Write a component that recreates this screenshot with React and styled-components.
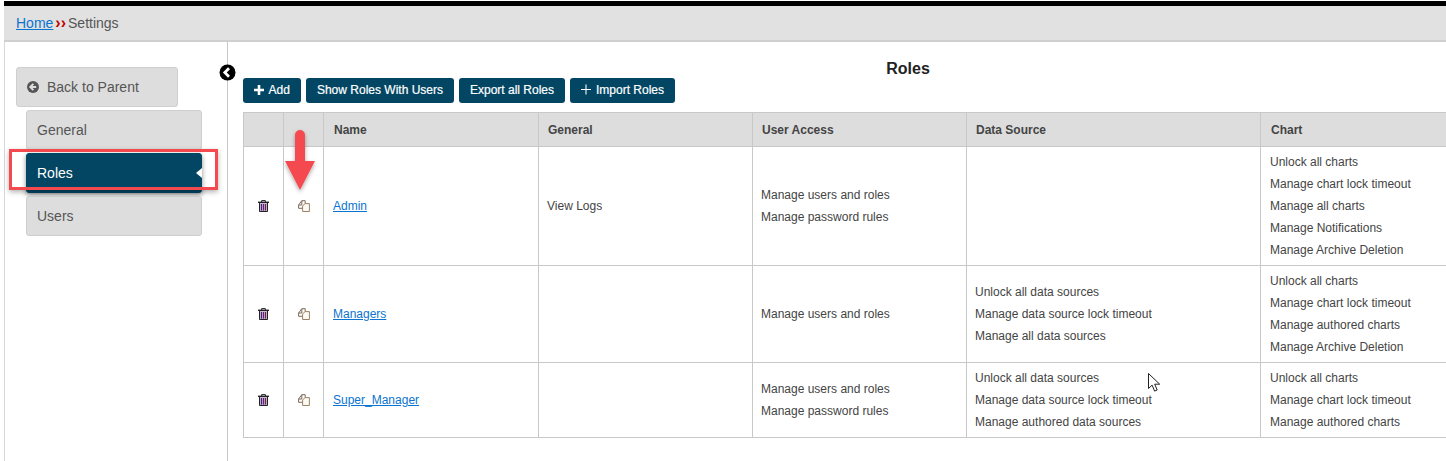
import React from "react";
import styled, { createGlobalStyle } from "styled-components";

const Global = createGlobalStyle`
  html, body { margin: 0; padding: 0; background: #fff; overflow: hidden; }
  body { font-family: "Liberation Sans", Arial, sans-serif; }
`;

const Page = styled.div`
  position: relative;
  width: 1446px;
  height: 461px;
  padding: 1px 0 0 4px;
  box-sizing: border-box;
  overflow: hidden;
  display: flex;
  flex-direction: column;
`;
const TopBar = styled.div`
  height: 5px;
  background: #000;
  flex: none;
`;
const Crumbs = styled.div`
  height: 36px;
  box-sizing: border-box;
  flex: none;
  background: #e1e1e1;
  border-bottom: 2px solid #cfcfcf;
  display: flex;
  align-items: center;
  padding: 0 0 0 12px;
  font-size: 14px;
  color: #555;
`;
const HomeLink = styled.a`
  color: #0b74d1;
  text-decoration: underline;
`;
const Sep = styled.span`
  color: #c00000;
  font-weight: bold;
  font-size: 16px;
  line-height: 14px;
  margin: 0 2px;
`;
const Body = styled.div`
  flex: 1;
  display: flex;
  border-left: 1px solid #d8d8d8;
  min-height: 0;
`;
const Sidebar = styled.aside`
  position: relative;
  width: 223px;
  flex: none;
  border-right: 1px solid #c8c8c8;
  padding: 25px 0 0 11px;
  box-sizing: border-box;
  display: flex;
  flex-direction: column;
`;
const BackButton = styled.div`
  width: 162px;
  height: 40px;
  box-sizing: border-box;
  background: #dddddd;
  border: 1px solid #cfcfcf;
  border-radius: 3px;
  display: flex;
  align-items: center;
  gap: 8px;
  padding-left: 10px;
  font-size: 14px;
  color: #555;
`;
const NavList = styled.nav`
  margin: 3px 0 0 10px;
  width: 176px;
  display: flex;
  flex-direction: column;
  gap: 3px;
`;
const NavItem = styled.div`
  position: relative;
  height: 40px;
  box-sizing: border-box;
  border-radius: 3px;
  display: flex;
  align-items: center;
  padding-left: 10px;
  font-size: 14px;
  background: ${p => (p.$active ? "#024664" : "#dddddd")};
  color: ${p => (p.$active ? "#fff" : "#555")};
  border: 1px solid ${p => (p.$active ? "#024664" : "#cfcfcf")};
  box-shadow: ${p => (p.$active ? "0 2px 5px rgba(0,0,0,.45)" : "none")};
`;
const Notch = styled.span`
  position: absolute;
  right: -1px;
  top: 14px;
  border: 5px solid transparent;
  border-left: 0;
  border-right: 6px solid #fff;
`;
const Collapse = styled.span`
  position: absolute;
  right: -9px;
  top: 22px;
  width: 17px;
  height: 17px;
  line-height: 0;
`;
const Main = styled.main`
  flex: 1;
  min-width: 0;
  position: relative;
  padding: 18px 0 0 15px;
`;
const Title = styled.h1`
  margin: 0;
  font-size: 16px;
  line-height: 18px;
  font-weight: bold;
  color: #222;
  text-align: center;
  width: 1330px;
`;
const Toolbar = styled.div`
  display: flex;
  gap: 5px;
  margin-bottom: 9px;
`;
const Btn = styled.button`
  height: 25px;
  padding: 0 11.4px 2px 10.6px;
  background: #024664;
  color: #fff;
  border: 0;
  border-radius: 3px;
  font: 12px "Liberation Sans", Arial, sans-serif;
  -webkit-text-stroke: 0.2px #fff;
  display: flex;
  align-items: center;
  gap: 5px;
`;
const Table = styled.table`
  border-collapse: collapse;
  table-layout: fixed;
  width: 1300px;
  font-size: 12px;
  color: #444;
`;
const Th = styled.th`
  background: #dddddd;
  border: 1px solid #c8c8c8;
  height: 33px;
  padding: 0 0 0 ${p => (p.$wide ? 10 : 9)}px;
  text-align: left;
  font-weight: bold;
  color: #444;
`;
const Td = styled.td`
  border: 1px solid #c8c8c8;
  padding: 4px 8px;
  padding-left: ${p => (p.$wide ? 9 : 8)}px;
  height: ${p => p.$h}px;
  box-sizing: border-box;
  vertical-align: middle;
  line-height: 22px;
`;
const IconTd = styled(Td)`
  padding: 0;
  text-align: center;
  line-height: 0;
`;
const RoleLink = styled.a`
  color: #0b74d1;
  text-decoration: underline;
`;
const Line = styled.div`
  white-space: nowrap;
`;
const Highlight = styled.div`
  position: absolute;
  left: 9px;
  top: 149px;
  width: 209px;
  height: 41px;
  box-sizing: border-box;
  border: 3px solid #f44a4f;
  box-shadow: 0 2px 5px rgba(0, 0, 0, .3);
`;
const Overlay = styled.svg`
  position: absolute;
  overflow: visible;
`;
const ArrowOverlay = styled(Overlay)`
  left: 285px;
  top: 130px;
`;
const CursorOverlay = styled(Overlay)`
  left: 1148px;
  top: 373px;
`;

const Back = () => (
  <svg width="12" height="12" viewBox="0 0 12 12">
    <circle cx="6" cy="6" r="6" fill="#555" />
    <path d="M6.4 2.8 3.2 6l3.2 3.2M3.4 6H9.2" fill="none" stroke="#ddd" strokeWidth="1.9" />
  </svg>
);
const Trash = () => (
  <svg width="11" height="12" viewBox="0 0 11 12">
    <path d="M3.6 2V.6h3.8V2" fill="none" stroke="#222" strokeWidth="1" />
    <rect x="0" y="1.6" width="11" height="1.4" fill="#222" />
    <path d="M1.5 3v8.5h8V3" fill="#cdb8dc" stroke="#222" strokeWidth="1" />
    <path d="M3.5 4v6.6" stroke="#3c2a68" strokeWidth="1.2" />
    <path d="M5.5 4v6.6" stroke="#6a1a86" strokeWidth="1.2" />
    <path d="M7.5 4v6.6" stroke="#6a2a3a" strokeWidth="1.2" />
  </svg>
);
const Copy = () => (
  <svg width="12" height="12" viewBox="0 0 12 12" fill="#fff" strokeWidth="1">
    <path d="M.6 5 3.8.7h3.4v7.6H.6z" stroke="#7a6a58" />
    <path d="M.8 5h3V.8" fill="none" stroke="#7a6a58" />
    <path d="M4.6 6 7 3.6h4.4v7.9H4.6z" stroke="#9a8468" fill="#fdfaf4" />
  </svg>
);

const rows = [
  {
    name: "Admin", h: 119, general: ["View Logs"],
    access: ["Manage users and roles", "Manage password rules"], ds: [],
    chart: ["Unlock all charts", "Manage chart lock timeout", "Manage all charts", "Manage Notifications", "Manage Archive Deletion"],
  },
  {
    name: "Managers", h: 97, general: [],
    access: ["Manage users and roles"],
    ds: ["Unlock all data sources", "Manage data source lock timeout", "Manage all data sources"],
    chart: ["Unlock all charts", "Manage chart lock timeout", "Manage authored charts", "Manage Archive Deletion"],
  },
  {
    name: "Super_Manager", h: 75, general: [],
    access: ["Manage users and roles", "Manage password rules"],
    ds: ["Unlock all data sources", "Manage data source lock timeout", "Manage authored data sources"],
    chart: ["Unlock all charts", "Manage chart lock timeout", "Manage authored charts"],
  },
];

const Lines = ({ items }) => items.map(t => <Line key={t}>{t}</Line>);

export default function App() {
  return (
    <Page>
      <Global />
      <TopBar />
      <Crumbs>
        <HomeLink href="#">Home</HomeLink>
        <Sep>››</Sep>
        <span>Settings</span>
      </Crumbs>
      <Body>
        <Sidebar>
          <BackButton><Back />Back to Parent</BackButton>
          <NavList>
            <NavItem>General</NavItem>
            <NavItem $active>Roles<Notch /></NavItem>
            <NavItem>Users</NavItem>
          </NavList>
          <Collapse>
            <svg width="17" height="17" viewBox="0 0 17 17">
              <circle cx="8.5" cy="8.5" r="8" fill="#000" />
              <path d="M10 4.2 5.8 8.5l4.2 4.3" fill="none" stroke="#fff" strokeWidth="2.8" />
            </svg>
          </Collapse>
        </Sidebar>
        <Main>
          <Title>Roles</Title>
          <Toolbar>
            <Btn>
              <svg width="10" height="10" viewBox="0 0 10 10"><path d="M5 0v10M0 5h10" stroke="#fff" strokeWidth="2.6" /></svg>
              Add
            </Btn>
            <Btn>Show Roles With Users</Btn>
            <Btn>Export all Roles</Btn>
            <Btn>
              <svg width="10" height="11" viewBox="0 0 11 11"><path d="M5.5 0v11M0 5.5h11" stroke="#fff" strokeWidth="1.2" /></svg>
              Import Roles
            </Btn>
          </Toolbar>
          <Table>
            <colgroup>
              <col width="40" /><col width="40" /><col width="215" /><col width="214" /><col width="214" /><col width="294" /><col width="283" />
            </colgroup>
            <thead>
              <tr>
                <Th /><Th />
                <Th $wide>Name</Th><Th>General</Th><Th>User Access</Th><Th>Data Source</Th><Th $wide>Chart</Th>
              </tr>
            </thead>
            <tbody>
              {rows.map(r => (
                <tr key={r.name}>
                  <IconTd $h={r.h}><Trash /></IconTd>
                  <IconTd $h={r.h}><Copy /></IconTd>
                  <Td $h={r.h} $wide><RoleLink href="#">{r.name}</RoleLink></Td>
                  <Td $h={r.h}><Lines items={r.general} /></Td>
                  <Td $h={r.h}><Lines items={r.access} /></Td>
                  <Td $h={r.h}><Lines items={r.ds} /></Td>
                  <Td $h={r.h} $wide><Lines items={r.chart} /></Td>
                </tr>
              ))}
            </tbody>
          </Table>
        </Main>
      </Body>
      <Highlight />
      <ArrowOverlay width="30" height="60" viewBox="0 0 30 60">
        <defs>
          <filter id="s" x="-40%" y="-20%" width="180%" height="140%">
            <feDropShadow dx="0" dy="2" stdDeviation="2" floodColor="#000" floodOpacity=".35" />
          </filter>
        </defs>
        <path d="M10 5a5 5 0 0 1 10 0v26h10L15 60 0 31h10z" fill="#f44a4f" filter="url(#s)" />
      </ArrowOverlay>
      <CursorOverlay width="13" height="19" viewBox="0 0 13 19">
        <path d="M.5.5v15l3.6-3.4 2.5 6 2.6-1.1-2.5-5.8h5z" fill="#fff" stroke="#222" strokeWidth="1" />
      </CursorOverlay>
    </Page>
  );
}
